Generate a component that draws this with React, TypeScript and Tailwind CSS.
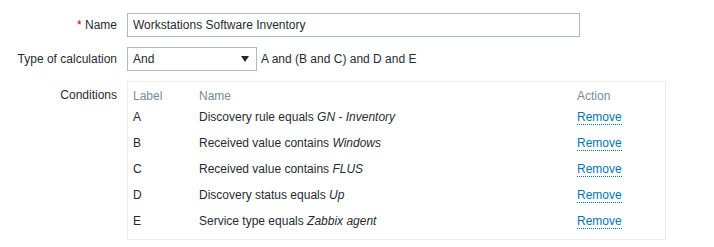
import React from 'react';

type Condition = {
  label: string;
  text: string;
  value: React.ReactNode;
};

const conditions: Condition[] = [
  {label: 'A', text: 'Discovery rule equals ', value: <><i>GN</i> - <i>Inventory</i></>},
  {label: 'B', text: 'Received value contains ', value: <i>Windows</i>},
  {label: 'C', text: 'Received value contains ', value: <i>FLUS</i>},
  {label: 'D', text: 'Discovery status equals ', value: <i>Up</i>},
  {label: 'E', text: 'Service type equals ', value: <i>Zabbix agent</i>},
];

const FormRow = ({label, children}: {label: React.ReactNode; children: React.ReactNode}) => (
  <div className="flex items-start gap-[10px]">
    <div className="w-[117px] shrink-0 text-right leading-[24px]">{label}</div>
    <div className="flex-1">{children}</div>
  </div>
);

export default function App() {
  return (
    <div
      className="h-[247px] w-[714px] bg-white pt-[13px] text-[12px] text-[#1f2c33]"
      style={{fontFamily: '"Liberation Sans", Arial, sans-serif'}}
    >
      <div className="flex flex-col gap-[10px]">
        <FormRow
          label={
            <>
              <span className="text-[#d40000]">*</span> Name
            </>
          }
        >
          <div className="h-[24px] w-[453px] border border-[#acbbc2] px-[5px] leading-[22px]">
            Workstations Software Inventory
          </div>
        </FormRow>
        <FormRow label="Type of calculation">
          <div className="flex items-center">
            <div className="flex h-[24px] w-[130px] items-center justify-between border border-[#acbbc2] pl-[5px] pr-[7px]">
              <span>And</span>
              <svg width="8" height="6" viewBox="0 0 8 6">
                <path d="M0 0 H8 L4 6 Z" fill="#1f2c33" />
              </svg>
            </div>
            <span className="ml-[4px]">A and (B and C) and D and E</span>
          </div>
        </FormRow>
        <div className="flex items-start gap-[10px]">
          <div className="w-[117px] shrink-0 pt-[6px] text-right leading-[16px]">Conditions</div>
          <div className="w-[539px] border border-[#ebebeb] px-[5px] pt-[6px] pb-[5px]">
            <div className="flex h-[16px] items-center text-[#768d99]">
              <div className="w-[66px]">Label</div>
              <div className="w-[378px]">Name</div>
              <div>Action</div>
            </div>
            {conditions.map((c) => (
              <div key={c.label} className="flex h-[26px] items-center">
                <div className="w-[66px]">{c.label}</div>
                <div className="w-[378px]">
                  {c.text}
                  {c.value}
                </div>
                <div>
                  <span className="cursor-pointer border-b border-dotted border-[#0275b8] text-[#0275b8] leading-[13px]">
                    Remove
                  </span>
                </div>
              </div>
            ))}
          </div>
        </div>
      </div>
    </div>
  );
}
